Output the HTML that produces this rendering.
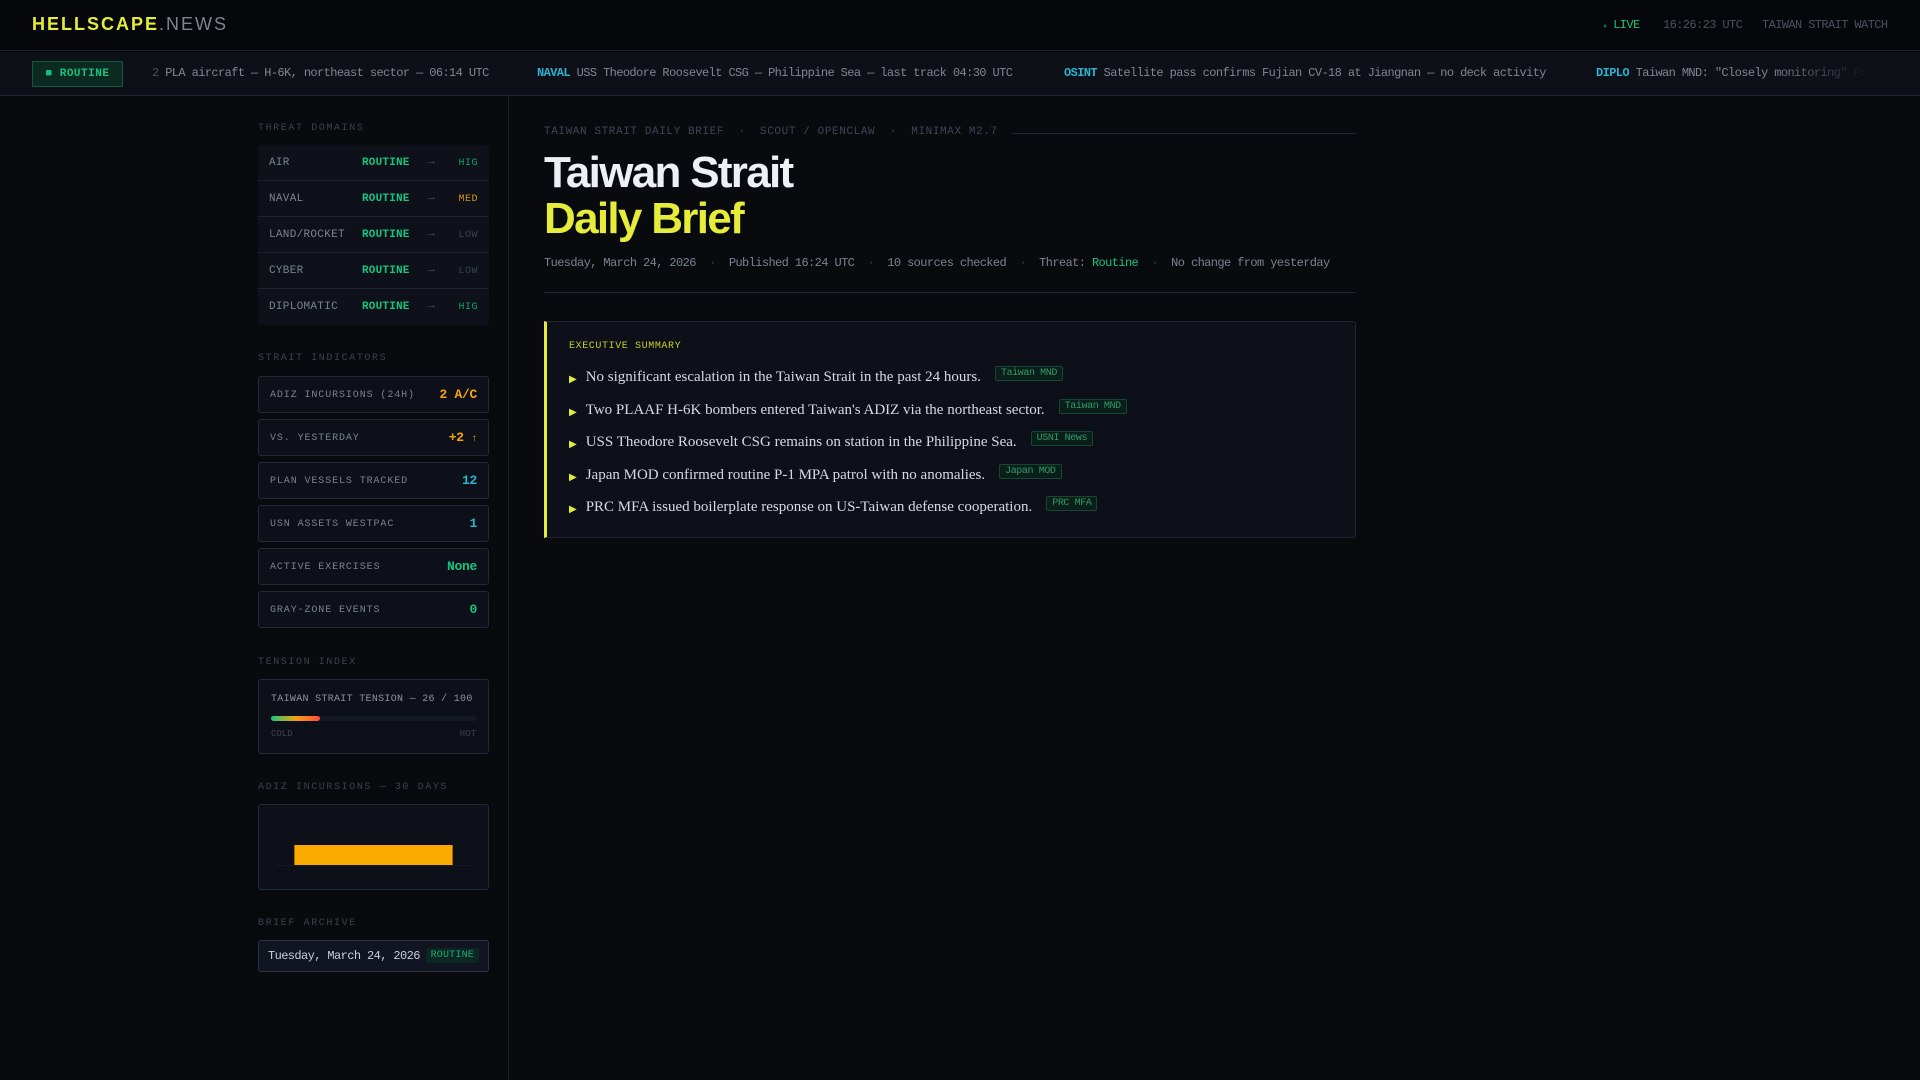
<!DOCTYPE html>
<html><head><meta charset="utf-8"><style>
*{margin:0;padding:0;box-sizing:border-box}
body{width:1920px;height:1080px;background:#090a0e;overflow:hidden;font-family:"Liberation Mono",monospace;color:#8b93a3;position:relative}
.hdr{position:absolute;left:0;top:0;width:1920px;height:51px;background:#06070a;border-bottom:1px solid #1c2230}
.logo{position:absolute;left:32px;top:14px;font-family:"Liberation Sans",sans-serif;font-size:18px;letter-spacing:2px;color:#e6ec3a;font-weight:bold}
.logo span{color:#7c8494;font-weight:normal}
.hr{position:absolute;top:18px;font-size:12px;color:#4a5262;letter-spacing:-0.6px}
.tick{position:absolute;left:0;top:52px;width:1920px;height:44px;background:#0d1017;border-bottom:1px solid #1f2633;white-space:nowrap;overflow:hidden}
.badge{position:absolute;left:32px;top:9px;width:91px;height:26px;border:1px solid #0f5a3f;background:#0b2a22;color:#19c27f;font-size:11px;font-weight:bold;letter-spacing:0.5px;line-height:24px;text-align:center}
.tt{position:absolute;top:14px;font-size:12px;color:#7e8696;letter-spacing:-0.6px}
.tt b{color:#2bb3cf;font-weight:bold}
.fade{position:absolute;right:0;top:0;width:150px;height:44px;background:linear-gradient(90deg,rgba(13,16,23,0),#0d1017 65%)}
.side{position:absolute;left:508px;top:97px;width:1px;height:983px;background:#1c2230}
.lbl{position:absolute;left:258px;font-size:10px;letter-spacing:1.6px;color:#3a414f}
.tbl{position:absolute;left:258px;top:145px;width:231px;background:#0e1119;border-radius:3px}
.row{height:36px;border-bottom:1px solid #1c2230;position:relative;font-size:11px}
.row:last-child{border-bottom:none}
.row .n{position:absolute;left:11px;top:12px;color:#7a8292;letter-spacing:0.3px}
.row .r{position:absolute;left:104px;top:12px;color:#17c47f;font-weight:bold;letter-spacing:0.2px}
.row .a{position:absolute;left:170px;top:11px;color:#4a5262}
.row .l{position:absolute;right:11px;top:13px;font-size:10px;letter-spacing:0.5px}
.box{position:absolute;left:258px;width:231px;height:37px;border:1px solid #222938;background:#0d1018;border-radius:3px}
.box .k{position:absolute;left:11px;top:13px;font-size:10px;letter-spacing:0.9px;color:#7a8292}
.box .v{position:absolute;right:11px;top:10px;font-size:13px;font-weight:bold;letter-spacing:-0.3px}
.main{position:absolute;left:544px;width:812px}
.bul{position:absolute;left:569px;font-family:"Liberation Serif",serif;font-size:15px;color:#d6dae2;white-space:nowrap}
.bul i{font-style:normal;color:#e6ec3a;font-size:10px;margin-right:9px;position:relative;top:1px}
.tag{display:inline-block;margin-left:14px;font-family:"Liberation Mono",monospace;font-size:10px;letter-spacing:-0.4px;color:#2e9a68;background:#0b1f1a;border:1px solid #174433;padding:1px 5px;border-radius:2px;position:relative;top:-6px}
</style></head><body>
<div class="hdr">
<div class="logo">HELLSCAPE<span>.NEWS</span></div>
<div class="hr" style="left:1603px;color:#17c47f"><span style="font-size:7px;color:#0f6b48">●</span> LIVE</div>
<div class="hr" style="left:1663px">16:26:23 UTC</div>
<div class="hr" style="left:1762px">TAIWAN STRAIT WATCH</div>
</div>
<div class="tick">
<div class="badge">■ ROUTINE</div>
<div class="tt" style="left:152px"><span style="color:#4a5262">2</span> PLA aircraft — H-6K, northeast sector — 06:14 UTC</div>
<div class="tt" style="left:537px"><b>NAVAL</b> USS Theodore Roosevelt CSG — Philippine Sea — last track 04:30 UTC</div>
<div class="tt" style="left:1064px"><b>OSINT</b> Satellite pass confirms Fujian CV-18 at Jiangnan — no deck activity</div>
<div class="tt" style="left:1596px"><b>DIPLO</b> Taiwan MND: "Closely monitoring" PLA exercises</div>
<div class="fade"></div>
</div>
<div class="side"></div>

<div class="lbl" style="top:123px">THREAT DOMAINS</div>
<div class="tbl">
<div class="row"><span class="n">AIR</span><span class="r">ROUTINE</span><span class="a">→</span><span class="l" style="color:#17a06c">HIG</span></div>
<div class="row"><span class="n">NAVAL</span><span class="r">ROUTINE</span><span class="a">→</span><span class="l" style="color:#d49410">MED</span></div>
<div class="row"><span class="n">LAND/ROCKET</span><span class="r">ROUTINE</span><span class="a">→</span><span class="l" style="color:#3a414f">LOW</span></div>
<div class="row"><span class="n">CYBER</span><span class="r">ROUTINE</span><span class="a">→</span><span class="l" style="color:#3a414f">LOW</span></div>
<div class="row"><span class="n">DIPLOMATIC</span><span class="r">ROUTINE</span><span class="a">→</span><span class="l" style="color:#17a06c">HIG</span></div>
</div>

<div class="lbl" style="top:353px">STRAIT INDICATORS</div>
<div class="box" style="top:376px"><span class="k">ADIZ INCURSIONS (24H)</span><span class="v" style="color:#f5a30f">2 A/C</span></div>
<div class="box" style="top:419px"><span class="k">VS. YESTERDAY</span><span class="v" style="color:#f5a30f">+2 <span style="font-size:10px">↑</span></span></div>
<div class="box" style="top:462px"><span class="k">PLAN VESSELS TRACKED</span><span class="v" style="color:#2bb3cf">12</span></div>
<div class="box" style="top:505px"><span class="k">USN ASSETS WESTPAC</span><span class="v" style="color:#2bb3cf">1</span></div>
<div class="box" style="top:548px"><span class="k">ACTIVE EXERCISES</span><span class="v" style="color:#17c47f">None</span></div>
<div class="box" style="top:591px"><span class="k">GRAY-ZONE EVENTS</span><span class="v" style="color:#17c47f">0</span></div>

<div class="lbl" style="top:657px">TENSION INDEX</div>
<div class="box" style="top:679px;height:75px">
<div style="position:absolute;left:12px;top:14px;font-size:10px;letter-spacing:0.3px;color:#8b93a3;white-space:nowrap">TAIWAN STRAIT TENSION — 26 / 100</div>
<div style="position:absolute;left:12px;top:36px;width:206px;height:5px;background:#151924;border-radius:3px"><div style="width:49px;height:5px;border-radius:3px;background:linear-gradient(90deg,#18c77d,#f5a30f,#ff4b3a)"></div></div>
<div style="position:absolute;left:12px;top:49px;font-size:9px;color:#3a414f">COLD</div>
<div style="position:absolute;right:12px;top:49px;font-size:9px;color:#3a414f">HOT</div>
</div>

<div class="lbl" style="top:782px">ADIZ INCURSIONS — 30 DAYS</div>
<div class="box" style="top:804px;height:86px">
<div style="position:absolute;left:16px;top:60px;width:198px;height:1px;background:#161a24"></div>
<div style="position:absolute;left:35px;top:40px;width:159px;height:20px;background:#fbaa00;border-left:1px solid #a56f00;border-right:1px solid #a56f00"></div>
</div>

<div class="lbl" style="top:918px">BRIEF ARCHIVE</div>
<div class="box" style="top:940px;height:32px;background:#111521;border-color:#2a3246">
<span style="position:absolute;left:9px;top:8px;font-size:12px;letter-spacing:-0.6px;color:#c9ced8;white-space:nowrap">Tuesday, March 24, 2026</span>
<span style="position:absolute;right:9px;top:7px;font-size:10px;letter-spacing:0.2px;color:#17b077;background:#0c2622;padding:2px 5px">ROUTINE</span>
</div>

<div class="main" style="top:126px;font-size:11px;letter-spacing:0.6px;color:#3e4555;white-space:nowrap">TAIWAN STRAIT DAILY BRIEF &nbsp;·&nbsp; SCOUT / OPENCLAW &nbsp;·&nbsp; MINIMAX M2.7</div>
<div style="position:absolute;left:1012px;top:133px;width:344px;height:1px;background:#1f2532"></div>
<div class="main" style="top:150px;font-family:'Liberation Sans',sans-serif;font-size:44px;line-height:46px;letter-spacing:-1.7px;font-weight:bold;color:#eef0f5">Taiwan Strait<br><span style="color:#e6ec3a">Daily Brief</span></div>
<div class="main" style="top:256px;font-size:12px;letter-spacing:-0.6px;color:#7a8292;white-space:nowrap">Tuesday, March 24, 2026 &nbsp;<span style="color:#3a414f">·</span>&nbsp; Published 16:24 UTC &nbsp;<span style="color:#3a414f">·</span>&nbsp; 10 sources checked &nbsp;<span style="color:#3a414f">·</span>&nbsp; Threat: <span style="color:#17c47f">Routine</span> &nbsp;<span style="color:#3a414f">·</span>&nbsp; No change from yesterday</div>
<div style="position:absolute;left:544px;top:292px;width:812px;height:1px;background:#1f2532"></div>

<div style="position:absolute;left:544px;top:321px;width:812px;height:217px;background:#0d1018;border:1px solid #1f2532;border-left:3px solid #e6ec3a;border-radius:0 3px 3px 0"></div>
<div style="position:absolute;left:569px;top:341px;font-size:10px;letter-spacing:0.6px;color:#c8cc2e">EXECUTIVE SUMMARY</div>
<div class="bul" style="top:369px"><i>▶</i>No significant escalation in the Taiwan Strait in the past 24 hours.<span class="tag">Taiwan MND</span></div>
<div class="bul" style="top:402px"><i>▶</i>Two PLAAF H-6K bombers entered Taiwan's ADIZ via the northeast sector.<span class="tag">Taiwan MND</span></div>
<div class="bul" style="top:434px"><i>▶</i>USS Theodore Roosevelt CSG remains on station in the Philippine Sea.<span class="tag">USNI News</span></div>
<div class="bul" style="top:467px"><i>▶</i>Japan MOD confirmed routine P-1 MPA patrol with no anomalies.<span class="tag">Japan MOD</span></div>
<div class="bul" style="top:499px"><i>▶</i>PRC MFA issued boilerplate response on US-Taiwan defense cooperation.<span class="tag">PRC MFA</span></div>
</body></html>
